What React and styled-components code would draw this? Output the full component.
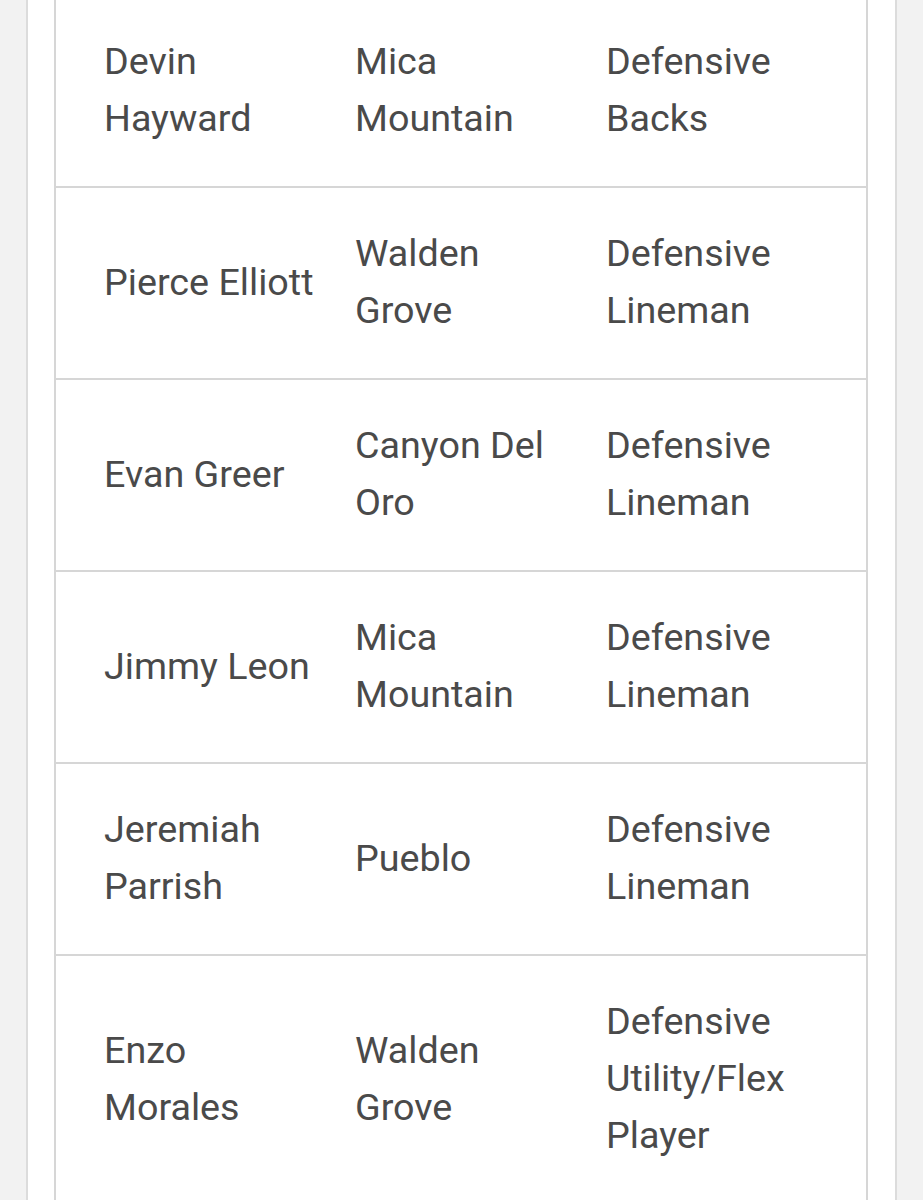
import React from "react";
import styled, { createGlobalStyle } from "styled-components";

const GlobalStyle = createGlobalStyle`
  html, body {
    margin: 0;
    padding: 0;
    background: #f2f2f2;
    overflow: hidden;
  }
`;

const Panel = styled.div`
  margin-left: 26px;
  width: 871px;
  min-height: 100vh;
  box-sizing: border-box;
  background: #ffffff;
  border-left: 2px solid #dcdcdc;
  border-right: 2px solid #dcdcdc;
  padding: 0 27px 0 26px;
`;

const Table = styled.div`
  margin-top: -4px;
  border-left: 2px solid #d6d6d6;
  border-right: 2px solid #d6d6d6;
  font-family: Roboto, "Liberation Sans", sans-serif;
  font-size: 37.7px;
  line-height: 57px;
  color: #4a4a4a;
`;

const Row = styled.div`
  display: grid;
  grid-template-columns: 220px 220px 1fr;
  column-gap: 31px;
  align-items: center;
  padding: 37px 24px 39px 48px;
  border-bottom: 2px solid #d6d6d6;
`;

const Cell = styled.div`
  min-width: 0;
`;

const players = [
  ["Devin Hayward", "Mica Mountain", "Defensive Backs"],
  ["Pierce Elliott", "Walden Grove", "Defensive Lineman"],
  ["Evan Greer", "Canyon Del Oro", "Defensive Lineman"],
  ["Jimmy Leon", "Mica Mountain", "Defensive Lineman"],
  ["Jeremiah Parrish", "Pueblo", "Defensive Lineman"],
  ["Enzo Morales", "Walden Grove", "Defensive Utility/Flex Player"],
];

export default function App() {
  return (
    <>
      <GlobalStyle />
      <Panel>
        <Table>
          {players.map(([name, school, position]) => (
            <Row key={name}>
              <Cell>{name}</Cell>
              <Cell>{school}</Cell>
              <Cell>{position}</Cell>
            </Row>
          ))}
        </Table>
      </Panel>
    </>
  );
}
